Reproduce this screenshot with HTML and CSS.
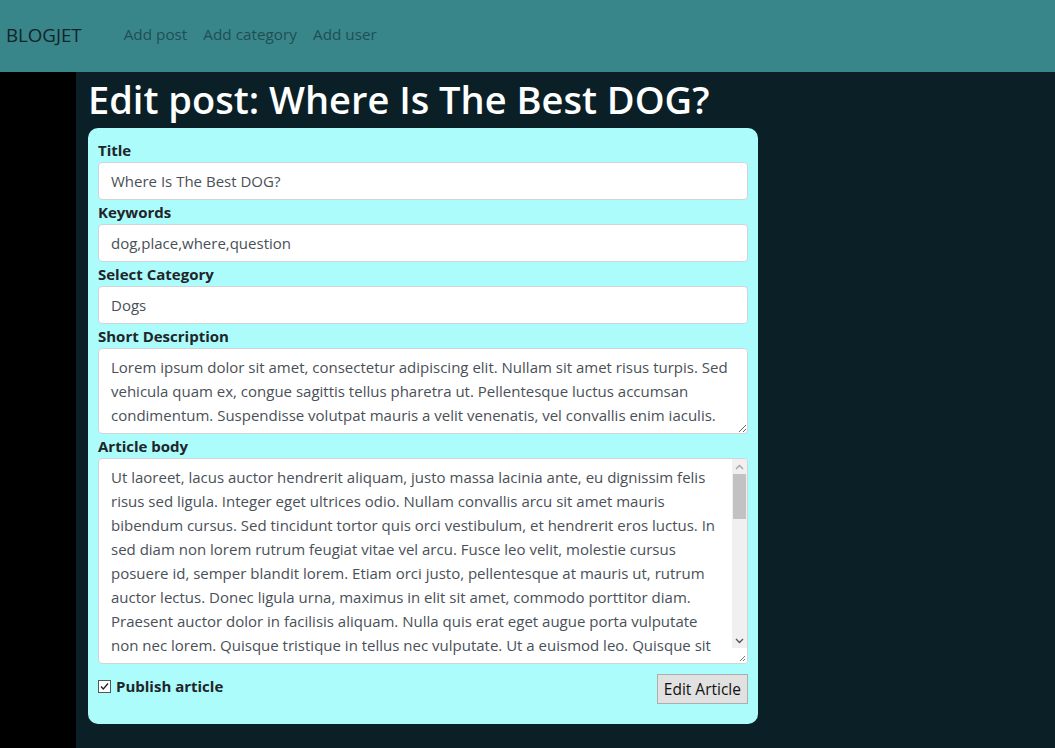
FILE: index.html
```html
<!DOCTYPE html>
<html lang="en">
<head>
<meta charset="utf-8">
<title>BLOGJET - Edit post</title>
<link rel="stylesheet" href="styles.css">
</head>
<body>
<nav class="navbar">
  <a class="brand" href="#">BLOGJET</a>
  <ul class="nav-links">
    <li><a href="#">Add post</a></li>
    <li><a href="#">Add category</a></li>
    <li><a href="#">Add user</a></li>
  </ul>
</nav>
<div class="layout">
  <aside class="sidebar"></aside>
  <main class="main">
    <h1 class="page-title">Edit post: Where Is The Best DOG?</h1>
    <form class="card">
      <label class="field-label" for="title">Title</label>
      <input class="form-control" id="title" type="text" value="Where Is The Best DOG?">
      <label class="field-label" for="keywords">Keywords</label>
      <input class="form-control" id="keywords" type="text" value="dog,place,where,question">
      <label class="field-label" for="category">Select Category</label>
      <div class="form-control select-box" id="category">Dogs</div>
      <label class="field-label" for="short">Short Description</label>
      <textarea class="form-control short-desc" id="short">Lorem ipsum dolor sit amet, consectetur adipiscing elit. Nullam sit amet risus turpis. Sed vehicula quam ex, congue sagittis tellus pharetra ut. Pellentesque luctus accumsan condimentum. Suspendisse volutpat mauris a velit venenatis, vel convallis enim iaculis.</textarea>
      <label class="field-label" for="body">Article body</label>
      <div class="body-box">
        <textarea class="body-text" id="body">Ut laoreet, lacus auctor hendrerit aliquam, justo massa lacinia ante, eu dignissim felis risus sed ligula. Integer eget ultrices odio. Nullam convallis arcu sit amet mauris bibendum cursus. Sed tincidunt tortor quis orci vestibulum, et hendrerit eros luctus. In sed diam non lorem rutrum feugiat vitae vel arcu. Fusce leo velit, molestie cursus posuere id, semper blandit lorem. Etiam orci justo, pellentesque at mauris ut, rutrum auctor lectus. Donec ligula urna, maximus in elit sit amet, commodo porttitor diam. Praesent auctor dolor in facilisis aliquam. Nulla quis erat eget augue porta vulputate non nec lorem. Quisque tristique in tellus nec vulputate. Ut a euismod leo. Quisque sit amet nunc at justo finibus pretium. Vivamus vitae lacus id nisl dictum egestas. Curabitur lacinia, nisi non pulvinar posuere, ipsum leo aliquet augue, a fermentum risus sapien ac lectus.</textarea>
        <div class="scrollbar" aria-hidden="true">
          <div class="sb-btn">
            <svg width="9" height="6" viewBox="0 0 9 6"><path d="M1 5 L4.5 1.5 L8 5" fill="none" stroke="#a3a3a3" stroke-width="1.3"/></svg>
          </div>
          <div class="sb-track"><div class="sb-thumb"></div></div>
          <div class="sb-btn">
            <svg width="9" height="6" viewBox="0 0 9 6"><path d="M1 1 L4.5 4.5 L8 1" fill="none" stroke="#505050" stroke-width="1.3"/></svg>
          </div>
          <div class="sb-corner">
            <svg width="8" height="8" viewBox="0 0 8 8"><path d="M7 2 L2 7 M7 5 L5 7" stroke="#777" stroke-width="1"/></svg>
          </div>
        </div>
      </div>
      <div class="form-footer">
        <label class="publish"><input type="checkbox" checked> Publish article</label>
        <button type="button" class="btn">Edit Article</button>
      </div>
    </form>
  </main>
</div>
</body>
</html>
```
FILE: styles.css
```css
* { box-sizing: border-box; }
html, body { margin: 0; padding: 0; }
body {
  font-family: "Open Sans", "Noto Sans", sans-serif;
  background: #0a2026;
  color: #212529;
  height: 748px;
  overflow: hidden;
}
.navbar {
  height: 72px;
  background: #39868a;
  display: flex;
  align-items: center;
  padding: 0 6px 4px;
}
.brand {
  font-size: 18.7px;
  color: #11232a;
  text-decoration: none;
  margin-right: 42px;
}
.nav-links {
  list-style: none;
  display: flex;
  gap: 16px;
  margin: 0;
  padding: 0;
}
.nav-links a {
  font-size: 15.3px;
  color: #1f4f55;
  text-decoration: none;
}
.layout {
  display: flex;
  height: 676px;
}
.sidebar {
  width: 76px;
  background: #000;
  flex: none;
}
.main {
  flex: 1;
  padding-left: 12px;
}
.page-title {
  margin: 4px 0 6px 0;
  font-size: 38px;
  line-height: 46px;
  font-weight: 600;
  color: #fff;
}
.card {
  width: 670px;
  background: #adfcfc;
  border-radius: 10px;
  padding: 10px 10px 20px;
  display: flex;
  flex-direction: column;
}
.field-label {
  font-size: 15px;
  font-weight: 700;
  color: #212529;
  line-height: 24px;
}
.form-control {
  display: block;
  width: 100%;
  height: 38px;
  padding: 6px 12px;
  font-family: inherit;
  font-size: 15px;
  line-height: 24px;
  color: #495057;
  background: #fff;
  border: 1px solid #ced4da;
  border-radius: 4px;
  margin: 0;
}
textarea.form-control { resize: vertical; }
.short-desc { height: 86px; overflow: hidden; }
.body-box {
  display: flex;
  height: 206px;
  background: #fff;
  border: 1px solid #ced4da;
  border-radius: 4px;
  overflow: hidden;
}
.body-text {
  flex: 1;
  border: 0;
  outline: 0;
  resize: none;
  overflow: hidden;
  padding: 6px 12px;
  font-family: inherit;
  font-size: 15px;
  line-height: 24px;
  color: #495057;
  background: transparent;
}
.scrollbar {
  width: 15px;
  flex: none;
  display: flex;
  flex-direction: column;
  background: #f0f0f0;
}
.sb-btn {
  height: 15px;
  display: flex;
  align-items: center;
  justify-content: center;
  flex: none;
}
.sb-track {
  flex: 1;
  padding: 0 1px;
}
.sb-thumb {
  height: 45px;
  background: #c2c2c2;
}
.sb-corner {
  height: 15px;
  flex: none;
  background: #fff;
  display: flex;
  align-items: flex-end;
  justify-content: flex-end;
  padding: 0 1px 1px 0;
}
.sb-corner svg { display: block; }
.form-footer {
  display: flex;
  justify-content: space-between;
  align-items: flex-start;
  margin-top: 10px;
}
.publish {
  font-size: 15px;
  font-weight: 700;
  color: #212529;
  display: flex;
  align-items: center;
  gap: 5px;
  margin-top: 0;
  line-height: 24px;
}
.publish input {
  appearance: none;
  -webkit-appearance: none;
  margin: 0;
  width: 13px;
  height: 13px;
  border: 1px solid #555;
  background: #fff url("data:image/svg+xml;utf8,<svg xmlns='http://www.w3.org/2000/svg' width='11' height='11' viewBox='0 0 11 11'><path d='M2 5.5 L4.3 8 L9 2.5' fill='none' stroke='%23222' stroke-width='1.3'/></svg>") center / 11px 11px no-repeat;
}
.btn {
  font-family: inherit;
  font-size: 15.5px;
  height: 30px;
  padding: 0 6px;
  background: #e1e1e1;
  border: 1px solid #adadad;
  border-radius: 0;
  color: #111;
}
```
